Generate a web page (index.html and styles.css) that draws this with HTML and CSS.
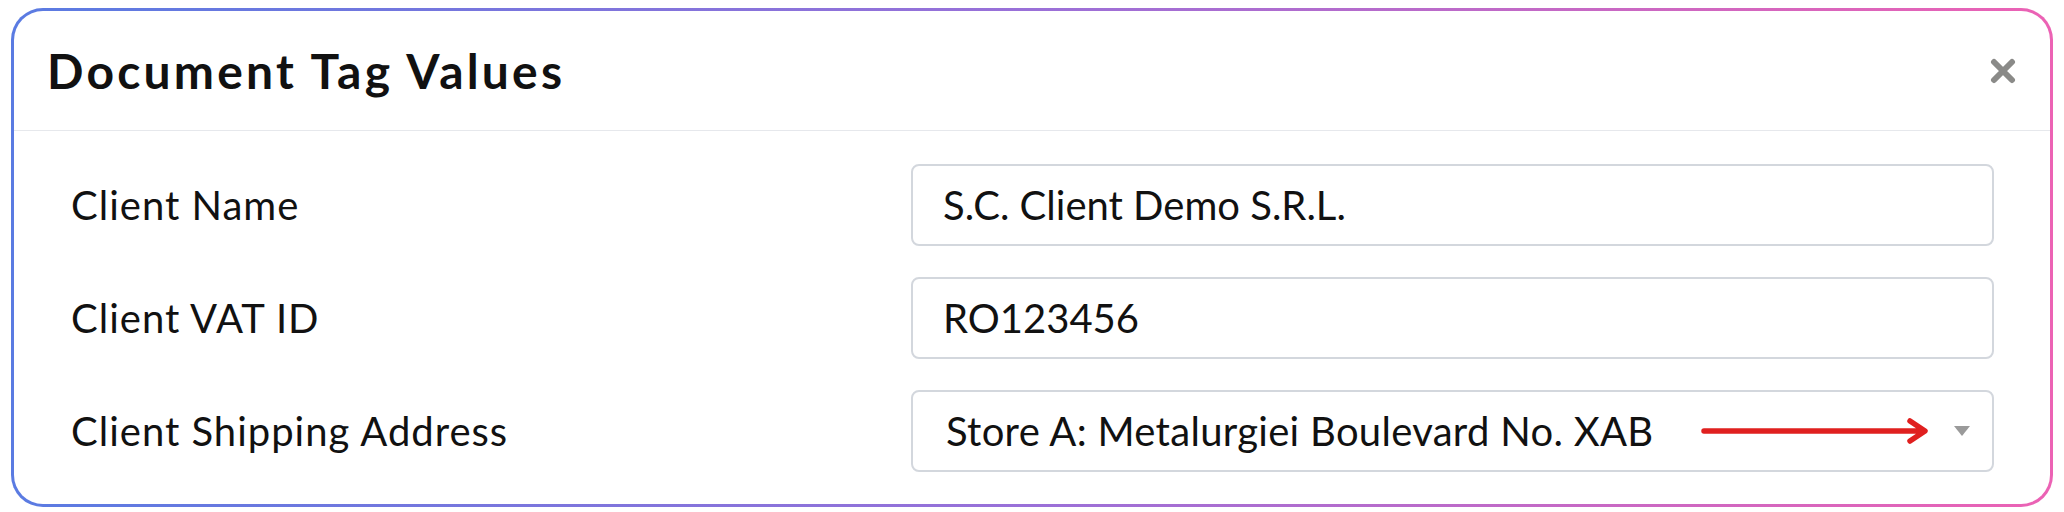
FILE: index.html
```html
<!DOCTYPE html>
<html lang="en">
<head>
<meta charset="utf-8">
<title>Document Tag Values</title>
<link rel="stylesheet" href="styles.css">
</head>
<body>
<div class="modal">
  <div class="modal-header">
    <h1 class="modal-title">Document Tag Values</h1>
    <button class="close-btn" aria-label="Close">
      <svg width="26" height="26" viewBox="0 0 26 26"><path d="M4 4 L22 22 M22 4 L4 22" stroke="#8a8a88" stroke-width="6" stroke-linecap="round"/></svg>
    </button>
  </div>
  <div class="modal-body">
    <div class="form-row">
      <label class="field-label">Client Name</label>
      <div class="field-input">S.C. Client Demo S.R.L.</div>
    </div>
    <div class="form-row">
      <label class="field-label">Client VAT ID</label>
      <div class="field-input">RO123456</div>
    </div>
    <div class="form-row">
      <label class="field-label">Client Shipping Address</label>
      <div class="field-input field-select">
        <span class="select-value">Store A: Metalurgiei Boulevard No. XAB</span>
        <svg class="annot-arrow" width="230" height="28" viewBox="0 0 230 28"><path d="M3 14 H222 M209 4 L224 14 L209 24" fill="none" stroke="#e0201f" stroke-width="5.5" stroke-linecap="round" stroke-linejoin="round"/></svg>
        <span class="caret"></span>
      </div>
    </div>
  </div>
</div>
</body>
</html>
```
FILE: styles.css
```css
* { box-sizing: border-box; }
html, body { margin: 0; padding: 0; background: #ffffff; }
body {
  font-family: Lato, "Liberation Sans", sans-serif;
  color: #111111;
  padding: 8px 11px 5px 11px;
}
.modal {
  width: 2042px;
  height: 499px;
  border: 3px solid transparent;
  border-radius: 32px;
  background:
    linear-gradient(#ffffff, #ffffff) padding-box,
    linear-gradient(90deg, #5a7be2 0%, #9a70d8 50%, #ec62b4 100%) border-box;
  display: flex;
  flex-direction: column;
}
.modal-header {
  height: 120px;
  display: flex;
  align-items: center;
  justify-content: space-between;
  padding: 0 34px 0 33px;
  border-bottom: 1.5px solid #e6e8ec;
}
.modal-title {
  margin: 0;
  font-size: 48px;
  font-weight: 700;
  letter-spacing: 3.2px;
  color: #111111;
}
.close-btn {
  border: 0;
  background: none;
  padding: 0;
  width: 26px;
  height: 26px;
  display: flex;
}
.modal-body {
  padding: 33px 56px 0 57px;
  display: flex;
  flex-direction: column;
  gap: 31px;
}
.form-row {
  display: grid;
  grid-template-columns: 840px 1fr;
  align-items: center;
}
.field-label {
  font-size: 40px;
  font-weight: 400;
  letter-spacing: 1px;
  color: #111111;
}
.field-input {
  height: 82px;
  border: 2px solid #d3d7dd;
  border-radius: 8px;
  padding: 0 28px 0 30px;
  font-size: 40px;
  display: flex;
  align-items: center;
  color: #111111;
}
.select-value { letter-spacing: 0.3px; }
.field-select { padding-left: 33px; padding-right: 22px; }
.annot-arrow { margin-left: auto; margin-right: 23px; display: block; }
.caret {
  width: 0; height: 0;
  border-left: 8.5px solid transparent;
  border-right: 8.5px solid transparent;
  border-top: 10px solid #9a9a9a;
}
```
